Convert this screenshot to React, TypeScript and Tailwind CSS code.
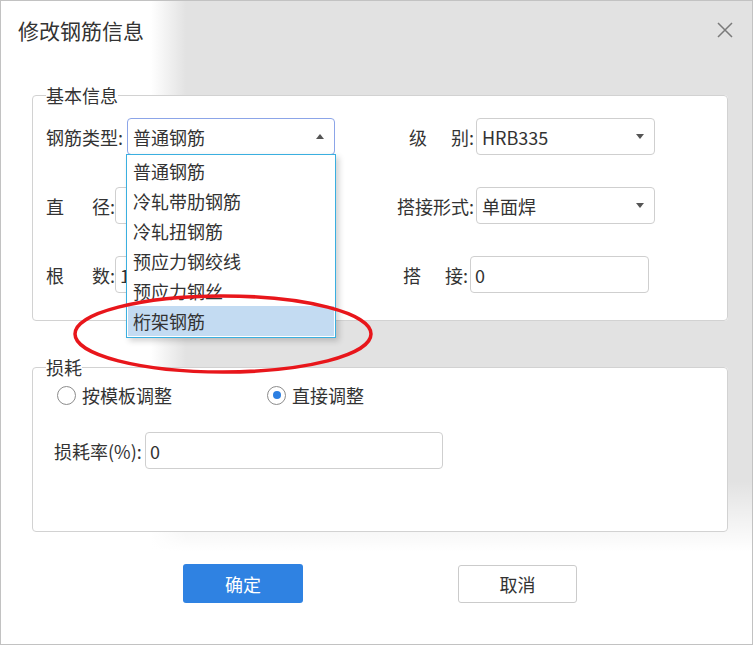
import React from 'react';

const items = ['普通钢筋', '冷轧带肋钢筋', '冷轧扭钢筋', '预应力钢绞线', '预应力钢丝', '桁架钢筋'];

type LblProps = { parts: string[]; className: string };

// label whose characters are spread across a fixed width, like "级    别:"
const Lbl: React.FC<LblProps> = ({ parts, className }) => (
  <span className={`flex shrink-0 justify-between ${className}`}>
    {parts.map(p => (
      <span key={p}>{p}</span>
    ))}
  </span>
);

const Caret: React.FC<{ up?: boolean }> = ({ up }) => (
  <svg width="8" height="5" viewBox="0 0 8 5" className="shrink-0">
    {up ? <path d="M0 5 L4 0 L8 5 Z" fill="#555" /> : <path d="M0 0 L8 0 L4 5 Z" fill="#555" />}
  </svg>
);

const Select: React.FC<{ value: string; className: string; focused?: boolean }> = ({ value, className, focused }) => (
  <div
    className={`flex h-[37px] items-center justify-between rounded-[4px] border bg-white pl-[5px] pr-[10px] ${
      focused ? 'border-[#8ca5e8]' : 'border-[#cfcfcf]'
    } ${className}`}
  >
    <span>{value}</span>
    <Caret up={focused} />
  </div>
);

const Input: React.FC<{ value: string; className: string }> = ({ value, className }) => (
  <div className={`flex h-[37px] items-center rounded-[4px] border border-[#cfcfcf] bg-white pl-[4px] ${className}`}>
    {value}
  </div>
);

const Radio: React.FC<{ checked?: boolean }> = ({ checked }) => (
  <span className="flex h-[19px] w-[19px] shrink-0 items-center justify-center rounded-full border border-[#8c8c8c] bg-white">
    {checked && <span className="h-[8px] w-[8px] rounded-full bg-[#2c7fe2]" />}
  </span>
);

export default function App() {
  return (
    <div className="relative h-[645px] w-[753px] overflow-hidden border border-[#c2c2c2] bg-[linear-gradient(to_right,#fff_150px,#e2e2e2_185px)] font-['Noto_Sans_CJK_SC','Noto_Sans',sans-serif] text-[18px] leading-[24px] text-[#333]">
      <div className="h-full bg-[linear-gradient(to_bottom,transparent_480px,#fff_550px)]">
        {/* title bar */}
        <div className="flex h-[58px] items-center justify-between pl-[17px] pr-[19px]">
          <span className="text-[21px]">修改钢筋信息</span>
          <svg width="16" height="16" viewBox="0 0 16 16">
            <path d="M1 1 L15 15 M15 1 L1 15" stroke="#7a7a7a" strokeWidth="1.5" fill="none" />
          </svg>
        </div>

        {/* 基本信息 */}
        <fieldset className="ml-[31px] mt-[24px] w-[696px] rounded-[4px] border border-[#d2d2d2] bg-white pb-[27px] pl-[13px] pt-[11px]">
          <legend className="leading-[24px]">基本信息</legend>

          <div className="flex h-[37px] items-center">
            <div className="flex w-[334px] items-center">
              <span className="w-[81px] shrink-0">钢筋类型:</span>
              <div className="relative z-10 w-[208px]">
                <Select value="普通钢筋" focused className="w-[208px]" />
                <div className="absolute left-[-1px] top-[36px] w-[210px] border border-[#3aafe0] bg-white p-px shadow-[3px_3px_6px_rgba(0,0,0,0.18)]">
                  {items.map((it, i) => (
                    <div
                      key={it}
                      className={`flex h-[30px] items-center pl-[5px] ${i === items.length - 1 ? 'bg-[#c3dbf2]' : ''}`}
                    >
                      {it}
                    </div>
                  ))}
                </div>
              </div>
            </div>
            <Lbl parts={['级', '别:']} className="ml-[29px] w-[65px]" />
            <Select value="HRB335" className="ml-[2px] w-[179px]" />
          </div>

          <div className="mt-[32px] flex h-[37px] items-center">
            <div className="flex w-[334px] items-center">
              <Lbl parts={['直', '径:']} className="w-[69px]" />
              <Input value="" className="w-[208px]" />
            </div>
            <span className="ml-[17px] w-[77px] shrink-0">搭接形式:</span>
            <Select value="单面焊" className="ml-[2px] w-[179px]" />
          </div>

          <div className="mt-[32px] flex h-[37px] items-center">
            <div className="flex w-[334px] items-center">
              <Lbl parts={['根', '数:']} className="w-[69px]" />
              <Input value="1" className="w-[208px]" />
            </div>
            <Lbl parts={['搭', '接:']} className="ml-[23px] w-[65px]" />
            <Input value="0" className="ml-[2px] w-[179px]" />
          </div>
        </fieldset>

        {/* 损耗 */}
        <fieldset className="ml-[31px] mt-[34px] w-[696px] rounded-[4px] border border-[#d2d2d2] bg-white pb-[62px] pt-[4px]">
          <legend className="ml-[13px] leading-[24px]">损耗</legend>
          <div className="flex h-[24px] items-center pl-[24px]">
            <div className="flex w-[210px] items-center gap-[6px]">
              <Radio />
              <span>按模板调整</span>
            </div>
            <div className="flex items-center gap-[6px]">
              <Radio checked />
              <span>直接调整</span>
            </div>
          </div>
          <div className="mt-[25px] flex items-center pl-[21px]">
            <span className="w-[91px] shrink-0">损耗率(%):</span>
            <Input value="0" className="h-[36px] w-[298px]" />
          </div>
        </fieldset>

        {/* buttons */}
        <div className="mt-[32px] flex items-center pl-[182px]">
          <button className="h-[39px] w-[120px] rounded-[3px] bg-[#2f82e2] text-white">确定</button>
          <button className="ml-[155px] h-[38px] w-[119px] rounded-[3px] border border-[#cbcbcb] bg-white text-[#333]">
            取消
          </button>
        </div>
      </div>

      {/* red annotation ring */}
      <svg className="pointer-events-none absolute inset-0 z-20" width="753" height="645" viewBox="0 0 753 645">
        <ellipse cx="222" cy="333" rx="148" ry="38" fill="none" stroke="#e8161b" strokeWidth="3.5" />
      </svg>
    </div>
  );
}
